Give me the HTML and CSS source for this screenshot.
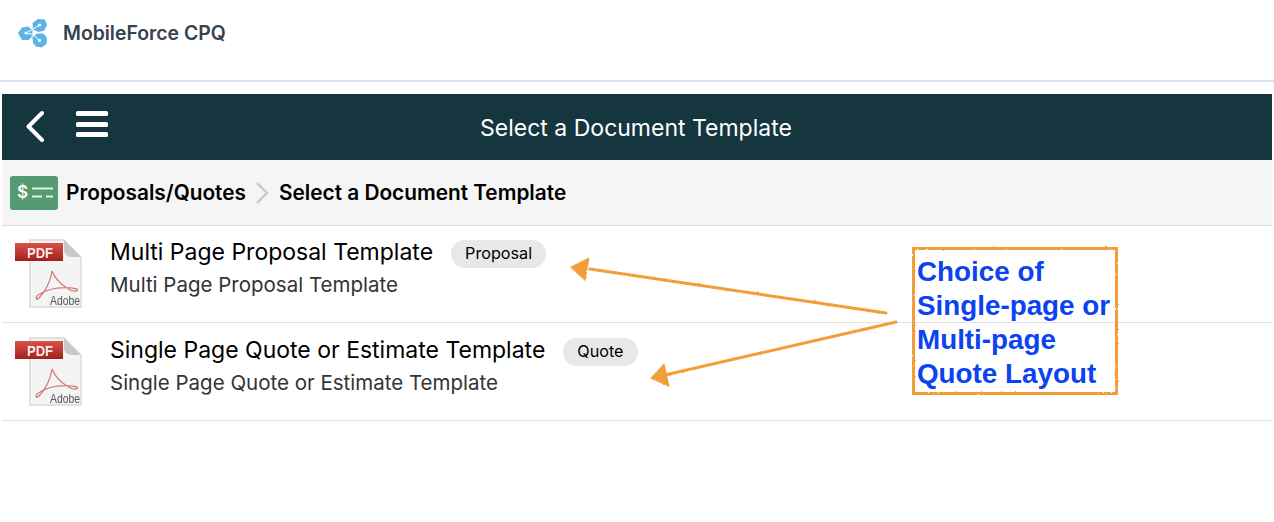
FILE: index.html
```html
<!DOCTYPE html>
<html>

<head>
  <meta charset="UTF-8" />
  <title>Select a Document Template</title>
  <link rel="stylesheet" href="styles.css">
</head>

<body>
  <header class="topbar">
    <svg class="logo" viewBox="0 0 30 30" width="30" height="30">
      <g fill="#5cb3e4">
        <path d="M14.5 5 L20 1 L27 1.5 L29 7 L26.5 12.5 L20.5 14 L15 11.5 Z" />
        <path d="M0 15 L4 9.5 L10 8.5 L14.5 12 L14.5 18 L10.5 22 L4 22 Z" />
        <path d="M14.5 19 L19 15.5 L25.5 15.5 L29 20 L28.5 26 L23.5 29.5 L18 28.5 L15 25 Z" />
      </g>
      <g fill="none" stroke="#fff" stroke-width="1">
        <path d="M21.5 7 L14.5 11.5 L8 15" />
        <path d="M8 15 L15 16.5 L21.5 22.5" />
        <path d="M21.5 7 h0.1 M8 15 h0.1 M21.5 22.5 h0.1" stroke-width="3.2" stroke-linecap="round" />
      </g>
    </svg>
    <span class="brand">MobileForce CPQ</span>
  </header>

  <main class="panel">
    <div class="titlebar">
      <div class="titlebar-icons">
        <svg class="back" viewBox="0 0 20 32" width="20" height="32">
          <path d="M17 3 L3.5 16.5 L17 30" fill="none" stroke="#fff" stroke-width="4" stroke-linecap="round" stroke-linejoin="round" />
        </svg>
        <div class="burger"><i></i><i></i><i></i></div>
      </div>
      <h1>Select a Document Template</h1>
    </div>

    <nav class="crumbs">
      <svg class="crumb-icon" viewBox="0 0 48 34" width="48" height="34">
        <rect width="48" height="34" rx="3" fill="#549a72" />
        <text x="7" y="22" class="dollar">$</text>
        <path d="M22 12.5 H43 M22 20.5 H32 M36 20.5 H43" stroke="#fff" stroke-width="2" opacity="0.85" />
      </svg>
      <span class="crumb">Proposals/Quotes</span>
      <svg class="crumb-sep" viewBox="0 0 14 24" width="14" height="24">
        <path d="M2 2 L12 12 L2 22" fill="none" stroke="#c8c8c8" stroke-width="2.4" />
      </svg>
      <span class="crumb">Select a Document Template</span>
    </nav>

    <ul class="list">
      <li class="row">
        <svg class="pdf" viewBox="0 0 70 72" width="70" height="72">
          <use href="#pdf-icon" />
        </svg>
        <div class="row-text">
          <div class="row-title">
            <span>Multi Page Proposal Template</span>
            <span class="tag">Proposal</span>
          </div>
          <div class="row-sub">Multi Page Proposal Template</div>
        </div>
      </li>
      <li class="row">
        <svg class="pdf" viewBox="0 0 70 72" width="70" height="72">
          <use href="#pdf-icon" />
        </svg>
        <div class="row-text">
          <div class="row-title">
            <span>Single Page Quote or Estimate Template</span>
            <span class="tag">Quote</span>
          </div>
          <div class="row-sub">Single Page Quote or Estimate Template</div>
        </div>
      </li>
    </ul>
  </main>

  <!-- annotation on top of the screenshot -->
  <svg class="arrows" viewBox="0 0 1274 522" width="1274" height="522">
    <g stroke="#f29d38" stroke-width="3" fill="#f29d38" stroke-linecap="round" filter="url(#rough)">
      <path d="M886 313 L590 269" fill="none" />
      <path d="M571 267 L589 258 L585 280 Z" stroke-width="1" />
      <path d="M896 322 L665 375" fill="none" />
      <path d="M651 378 L664 364 L669 386 Z" stroke-width="1" />
      <rect x="913.5" y="248.5" width="203" height="145" fill="none" stroke-width="3" />
    </g>
  </svg>
  <div class="note">Choice of<br>Single-page or<br>Multi-page<br>Quote Layout</div>

  <svg class="defs" width="0" height="0">
    <defs>
      <filter id="rough" x="-5%" y="-5%" width="110%" height="110%">
        <feTurbulence type="fractalNoise" baseFrequency="0.35" numOctaves="2" seed="4" />
        <feDisplacementMap in="SourceGraphic" scale="2" />
      </filter>
      <filter id="soft" x="-5%" y="-5%" width="110%" height="110%">
        <feGaussianBlur stdDeviation="0.5" />
      </filter>
      <linearGradient id="pdf-red" x1="0" y1="0" x2="0" y2="1">
        <stop offset="0" stop-color="#d9534a" />
        <stop offset="1" stop-color="#a3201c" />
      </linearGradient>
      <g id="pdf-icon" filter="url(#soft)">
        <path d="M16 2 H50 L67 19 V69 H16 Z" fill="#f4f4f4" stroke="#d8d8d8" stroke-width="1.4" />
        <path d="M50 2 L67 19 H56 Q50 17 50 12 Z" fill="#c9c9c9" />
        <rect x="1" y="5" width="48" height="18" fill="url(#pdf-red)" />
        <text x="13" y="19.5" class="pdf-label" textLength="26" lengthAdjust="spacingAndGlyphs">PDF</text>
        <path d="M38 33 C37 43 31 54 25 60 C21 64 21 58 26 56 C36 50 50 48 63 51 C65 54 58 54 53 50 C46 46 41 40 38 33" fill="none" stroke="#cf7f78" stroke-width="1.3" />
        <text x="36" y="67" class="pdf-adobe" textLength="30" lengthAdjust="spacingAndGlyphs">Adobe</text>
      </g>
    </defs>
  </svg>
</body>

</html>
```

FILE: styles.css
```css
body {
  margin: 0;
  background: #fff;
  font-family: Inter, "Liberation Sans", sans-serif;
  position: relative;
  width: 1274px;
  height: 522px;
  overflow: hidden;
}

.topbar {
  height: 66px;
  border-bottom: 2px solid #dde0e4;
  display: flex;
  align-items: center;
  padding: 0 0 14px 18px;
}

.logo {
  margin-right: 15px;
}

.brand {
  font-size: 19.4px;
  font-weight: 600;
  color: #36424e;
}

.panel {
  margin: 12px 2px 0;
}

.titlebar {
  height: 66px;
  box-sizing: border-box;
  padding: 1px 2px 0 0;
  background: #15363f;
  display: flex;
  align-items: center;
  justify-content: center;
  position: relative;
}

.titlebar h1 {
  margin: 0;
  font-size: 23px;
  font-weight: 400;
  color: #fff;
}

.titlebar-icons {
  position: absolute;
  left: 23px;
  top: 16px;
  display: flex;
  align-items: center;
  gap: 31px;
}

.burger {
  display: flex;
  flex-direction: column;
  gap: 5.5px;
  margin-top: -4px;
}

.burger i {
  display: block;
  width: 32px;
  height: 5px;
  border-radius: 1.5px;
  background: #fff;
}

.crumbs {
  height: 65px;
  background: #f5f5f5;
  border-bottom: 1px solid #ddd;
  display: flex;
  align-items: center;
  padding-left: 8px;
}

.crumb-icon {
  margin-right: 8px;
}

.dollar {
  font-size: 17px;
  font-weight: 600;
  fill: #fff;
}

.crumb {
  font-size: 20.8px;
  font-weight: 600;
  color: #000;
}

.crumb-sep {
  margin: 0 10px 0 9px;
}

.list {
  list-style: none;
  margin: 0;
  padding: 0;
}

.row {
  height: 97px;
  box-sizing: border-box;
  border-bottom: 1px solid #e2e2e2;
  display: flex;
  align-items: flex-start;
  padding: 11px 0 0 12px;
}

.row + .row {
  height: 98px;
  padding-top: 12px;
}

.pdf {
  margin: 1px 26px 0 0;
  flex: none;
}

.row-title {
  display: flex;
  align-items: center;
  height: 28px;
  font-size: 23px;
  line-height: 28px;
  color: #000;
  gap: 18px;
  margin: 1px 0 5px;
}

.tag {
  font-size: 16.2px;
  padding: 0 14px;
  height: 28px;
  line-height: 26px;
  border-radius: 14px;
  background: #e8e8e8;
  margin-top: 4px;
}

.row-sub {
  font-size: 20.5px;
  line-height: 28px;
  color: #333;
}

.arrows {
  position: absolute;
  left: 0;
  top: 0;
}

.note {
  position: absolute;
  left: 917px;
  top: 255px;
  font-family: "Liberation Sans", sans-serif;
  font-size: 27.8px;
  line-height: 34px;
  font-weight: 700;
  color: #0b43f0;
}

.defs {
  position: absolute;
}

.pdf-label {
  font-family: "Liberation Sans", sans-serif;
  font-size: 14px;
  font-weight: 700;
  fill: #fbeeee;
}

.pdf-adobe {
  font-family: "Liberation Sans", sans-serif;
  font-size: 13px;
  fill: #555;
}
```
